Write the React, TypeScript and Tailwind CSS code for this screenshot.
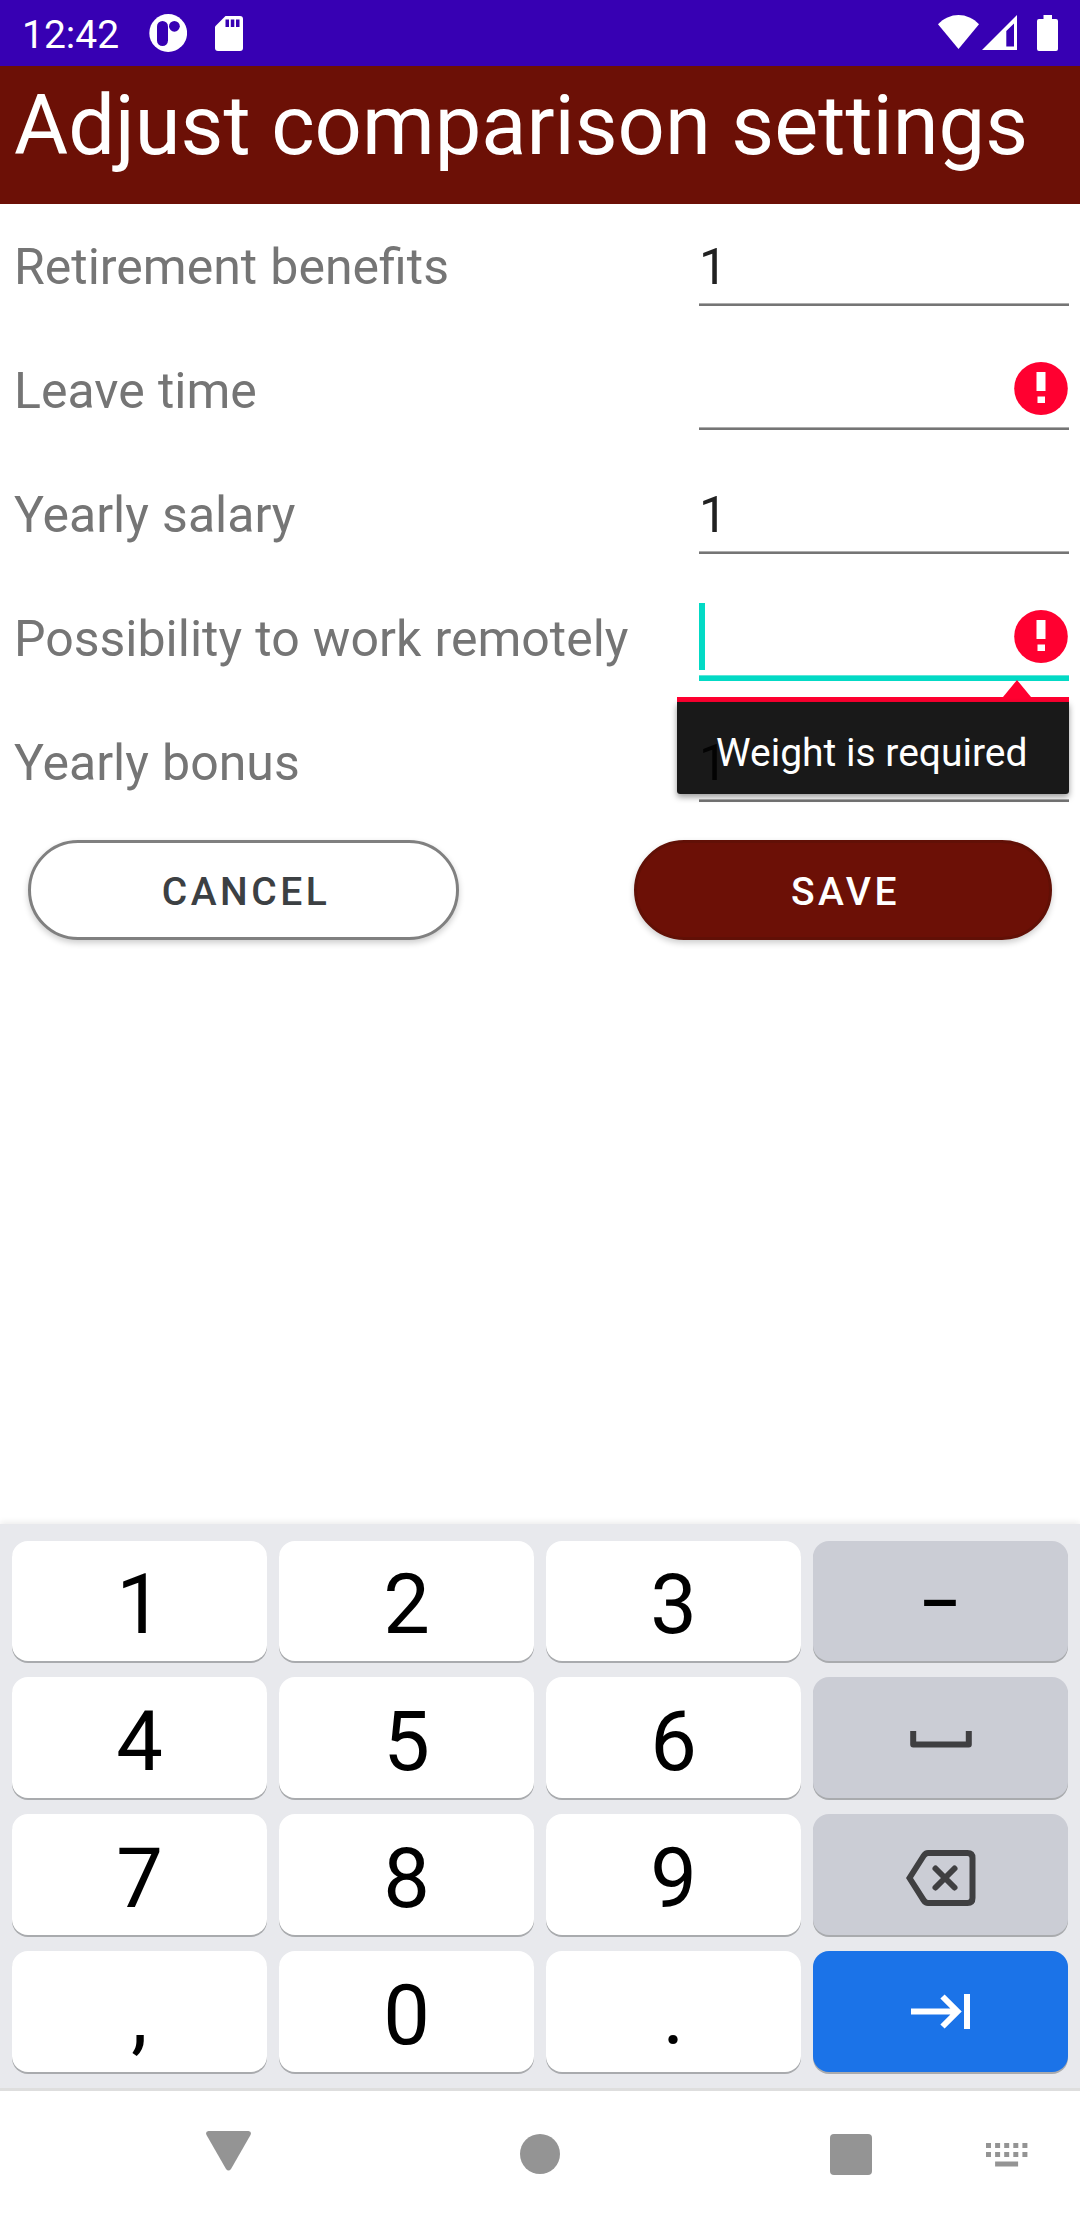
import type { ReactNode } from "react";

function AppBadgeIcon() {
  return (
    <svg className="ml-[31px] h-[38px] w-[38px]" viewBox="0 0 38 38">
      <circle cx="19.200" cy="19" r="18.900" fill="#fff" />
      <rect x="8" y="7" width="11" height="25" rx="5.500" fill="#3700b3" />
      <circle cx="25.400" cy="12.300" r="5.400" fill="#3700b3" />
    </svg>
  );
}

function SdCardIcon() {
  return (
    <svg className="ml-[28px] h-[35px] w-7" viewBox="0 0 28 35">
      <path d="M10.500 0H25a3 3 0 0 1 3 3V32a3 3 0 0 1-3 3H3a3 3 0 0 1-3-3V10.500Z" fill="#fff" />
      <path d="M10.500 3.500h3.500v7.500h-3.500zM15.800 3.500h3.500v7.500h-3.500zM21 3.500h3.500v7.500H21z" fill="#3700b3" />
    </svg>
  );
}

function StatusBar() {
  return (
    <div className="flex h-[66px] items-center bg-[#3700b3] pr-[22px] pl-[22px] text-white">
      <span className="mt-[4px] w-[96px] text-[39px] leading-[60px] whitespace-nowrap">12:42</span>
      <AppBadgeIcon />
      <SdCardIcon />
      <div className="ml-auto flex items-start">
        <svg className="h-[34px] w-[41px]" viewBox="0 0 41 35" preserveAspectRatio="none">
          <path d="M0 9.500C5.500 3.500 13 0 20.500 0S35.500 3.500 41 9.500L20.500 35Z" fill="#fff" />
        </svg>
        <svg className="ml-[3px] h-[35px] w-[35px]" viewBox="0 0 35 35">
          <path d="M35 0V35H0ZM32 8.500L24.300 16V31.500H32Z" fill="#fff" fillRule="evenodd" />
        </svg>
        <svg className="ml-5 h-[36px] w-[21px]" viewBox="0 0 21 36">
          <path d="M6.500 0h8.500v4H19a2 2 0 0 1 2 2V34a2 2 0 0 1-2 2H2a2 2 0 0 1-2-2V6a2 2 0 0 1 2-2H6.500Z" fill="#fff" />
        </svg>
      </div>
    </div>
  );
}

function ErrorIcon() {
  return (
    <svg className="mt-[23px] mr-px ml-auto h-[53px] w-[54px]" viewBox="0 0 54 53">
      <ellipse cx="27" cy="26.500" rx="26.800" ry="26.500" fill="#ff0030" />
      <path d="M22.500 10h9v19h-9zM23.500 34.500h7.500v6.500h-7.500z" fill="#fff" />
    </svg>
  );
}

type Field = { label: string; value?: string; error?: boolean; focused?: boolean };

const fields: Field[] = [
  { label: "Retirement benefits", value: "1" },
  { label: "Leave time", error: true },
  { label: "Yearly salary", value: "1" },
  { label: "Possibility to work remotely", error: true, focused: true },
  { label: "Yearly bonus", value: "1" },
];

function ErrorPopup() {
  return (
    <div className="absolute top-[93px] right-0 z-10 w-[392px]">
      <svg className="ml-[326px] block h-[17px] w-7" viewBox="0 0 28 17">
        <path d="M14 0L28 17H0Z" fill="#ff0030" />
      </svg>
      <div className="h-[5px] bg-[#ff0030]" />
      <div className="h-[92px] rounded-b-[3px] bg-black/90 pl-[39px] text-[39px] leading-[103px] whitespace-nowrap text-white shadow-[0_3px_6px_rgba(0,0,0,0.4)]">
        Weight is required
      </div>
    </div>
  );
}

function FieldRow({ label, value, error, focused }: Field) {
  return (
    <div className="flex h-[124px]">
      <div className="w-[699px] pl-[14px] text-[50px] leading-[104px] whitespace-nowrap text-[#757575] [word-spacing:0.800px]">
        {label}
      </div>
      <div className="relative w-[370px]">
        <div className="flex h-[88px] items-start text-[50px] leading-[104px] text-[#212121]">
          {focused && <span className="mt-4 h-[67px] w-[6px] bg-[#03dac5]" />}
          {value && <span>{value}</span>}
          {error && <ErrorIcon />}
        </div>
        {focused ? (
          <div className="h-[6px] border-t border-[#5ce6d8] bg-[#03dac5]" />
        ) : (
          <div className="h-[3px] border-t border-[#adadad] bg-[#757575]" />
        )}
        {focused && <ErrorPopup />}
      </div>
    </div>
  );
}

function Key({ children, tone }: { children: ReactNode; tone?: "gray" | "blue" }) {
  const bg = tone === "gray" ? "bg-[#cbcdd5]" : tone === "blue" ? "bg-[#1b73e8]" : "bg-white";
  return (
    <button
      className={`flex items-center justify-center rounded-[16px] text-black shadow-[0_2px_0_#a9abae] ${bg}`}
    >
      {children}
    </button>
  );
}

function Glyph({ children }: { children: string }) {
  return <span className="pt-[8px] text-[83px] leading-[100px]">{children}</span>;
}

function Keyboard() {
  return (
    <div className="h-[564px] bg-[#e8e9ed] px-3 pt-[17px] shadow-[0_-2px_6px_rgba(0,0,0,0.08)]">
      <div className="grid grid-cols-4 grid-rows-[120px_121px_121px_121px] gap-x-3 gap-y-4">
        <Key><Glyph>1</Glyph></Key>
        <Key><Glyph>2</Glyph></Key>
        <Key><Glyph>3</Glyph></Key>
        <Key tone="gray">
          <span className="scale-x-[0.78] pt-[8px] text-[83px] leading-[100px]">–</span>
        </Key>
        <Key><Glyph>4</Glyph></Key>
        <Key><Glyph>5</Glyph></Key>
        <Key><Glyph>6</Glyph></Key>
        <Key tone="gray">
          <svg className="mt-[3px] h-[17px] w-[62px]" viewBox="0 0 62 17">
            <path d="M3.200 0V13.500H58.800V0" fill="none" stroke="#3f3f41" strokeWidth="6" strokeLinejoin="round" />
          </svg>
        </Key>
        <Key><Glyph>7</Glyph></Key>
        <Key><Glyph>8</Glyph></Key>
        <Key><Glyph>9</Glyph></Key>
        <Key tone="gray">
          <svg className="mt-[6px] h-[56px] w-[70px]" viewBox="0 0 70 56" fill="none" stroke="#3f3f41" strokeWidth="6">
            <path d="M3.500 28L17.500 6Q19.500 3 22 3H61.500Q66.500 3 66.500 8V48Q66.500 53 61.500 53H22Q19.500 53 17.500 50Z" />
            <path d="M29.500 18.500L48.500 37.500M48.500 18.500L29.500 37.500" strokeLinecap="round" />
          </svg>
        </Key>
        <Key><Glyph>,</Glyph></Key>
        <Key><Glyph>0</Glyph></Key>
        <Key><Glyph>.</Glyph></Key>
        <Key tone="blue">
          <svg className="h-[35px] w-[60px]" viewBox="0 0 60 35" fill="none" stroke="#fff" strokeWidth="6">
            <path d="M0 17.500H46M31.500 2.500L46.500 17.500L31.500 32.500M56 0V35" />
          </svg>
        </Key>
      </div>
    </div>
  );
}

function NavBar() {
  return (
    <div className="flex h-[132px] items-start border-t-[3px] border-[#dedede] bg-white">
      <svg className="mt-10 ml-[206px] h-10 w-[45px]" viewBox="0 0 45 40">
        <path d="M2.500 0H42.500Q46 .5 44.500 4L25 38Q22.500 41 20 38L.5 4Q-1 .5 2.500 0Z" fill="#949494" />
      </svg>
      <div className="mt-[43px] ml-[269px] size-10 rounded-full bg-[#949494]" />
      <div className="mt-[43px] ml-[270px] h-[41px] w-[42px] rounded-[4px] bg-[#949494]" />
      <svg className="mt-[52px] ml-[114px] h-[24px] w-[42px]" viewBox="0 0 42 24" fill="#949494">
        {[0, 9.1, 18.2, 27.3, 36.4].map((x) => (
          <g key={x}>
            <rect x={x} y="0" width="5" height="5" />
            <rect x={x} y="9" width="5" height="5" />
          </g>
        ))}
        <rect x="9.100" y="18.500" width="23" height="5" />
      </svg>
    </div>
  );
}

export default function App() {
  return (
    <div className="flex h-[2220px] w-[1080px] flex-col overflow-hidden bg-white font-['Roboto',sans-serif]">
      <StatusBar />
      <h1 className="h-[138px] bg-[#6c1006] pl-[14px] text-[83px] leading-[120px] whitespace-nowrap text-white">
        Adjust comparison settings
      </h1>
      <main className="flex-1">
        <div className="pt-[11px]">
          {fields.map((f) => (
            <FieldRow key={f.label} {...f} />
          ))}
        </div>
        <div className="mt-[5px] flex justify-between pr-7 pl-[28px]">
          <button className="h-[100px] w-[431px] rounded-full border-[3px] border-[#808080] bg-white pt-[5px] pl-[5px] text-[39px] font-medium tracking-[0.0892em] text-[#3c4043] shadow-[0_3px_6px_rgba(0,0,0,0.2)]">
            CANCEL
          </button>
          <button className="h-[100px] w-[418px] rounded-full border-[3px] border-[#611006] bg-[#6c1006] pt-[5px] pl-[5px] text-[39px] font-medium tracking-[0.0892em] text-white shadow-[0_3px_6px_rgba(0,0,0,0.2)]">
            SAVE
          </button>
        </div>
      </main>
      <Keyboard />
      <NavBar />
    </div>
  );
}
